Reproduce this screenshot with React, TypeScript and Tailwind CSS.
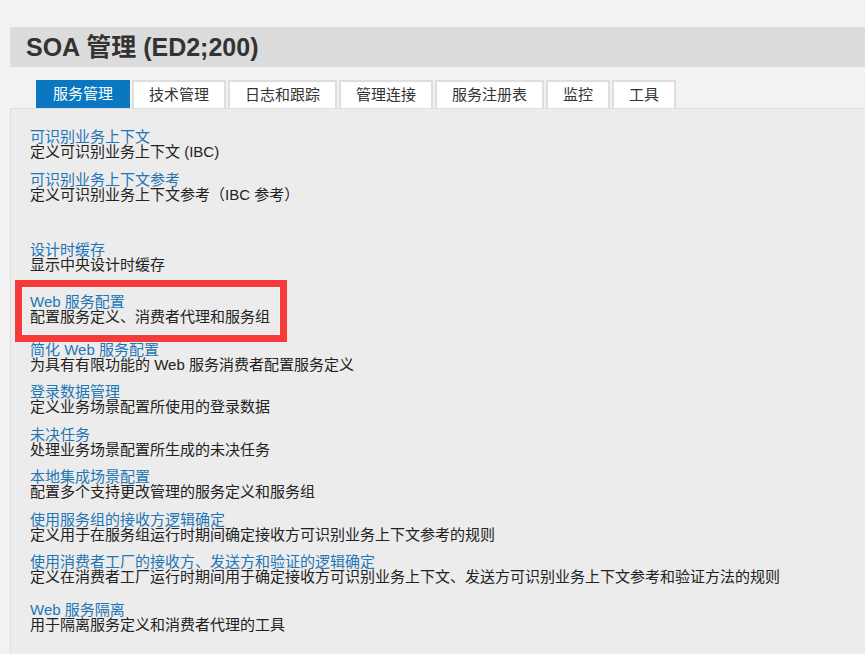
const tabs = ["服务管理", "技术管理", "日志和跟踪", "管理连接", "服务注册表", "监控", "工具"];

type Entry = { title: string; desc: string; mt: string };

const entries: Entry[] = [
  { title: "可识别业务上下文", desc: "定义可识别业务上下文 (IBC)", mt: "mt-0" },
  { title: "可识别业务上下文参考", desc: "定义可识别业务上下文参考（IBC 参考）", mt: "mt-[13px]" },
  { title: "设计时缓存", desc: "显示中央设计时缓存", mt: "mt-[40px]" },
  { title: "Web 服务配置", desc: "配置服务定义、消费者代理和服务组", mt: "mt-[22px]" },
  { title: "简化 Web 服务配置", desc: "为具有有限功能的 Web 服务消费者配置服务定义", mt: "mt-[18px]" },
  { title: "登录数据管理", desc: "定义业务场景配置所使用的登录数据", mt: "mt-[12px]" },
  { title: "未决任务", desc: "处理业务场景配置所生成的未决任务", mt: "mt-[13px]" },
  { title: "本地集成场景配置", desc: "配置多个支持更改管理的服务定义和服务组", mt: "mt-[12px]" },
  { title: "使用服务组的接收方逻辑确定", desc: "定义用于在服务组运行时期间确定接收方可识别业务上下文参考的规则", mt: "mt-[13px]" },
  {
    title: "使用消费者工厂的接收方、发送方和验证的逻辑确定",
    desc: "定义在消费者工厂运行时期间用于确定接收方可识别业务上下文、发送方可识别业务上下文参考和验证方法的规则",
    mt: "mt-[12px]",
  },
  { title: "Web 服务隔离", desc: "用于隔离服务定义和消费者代理的工具", mt: "mt-[18px]" },
];

export default function App() {
  return (
    <div className="relative flex h-[654px] w-[865px] flex-col overflow-hidden bg-[#f2f2f2] pt-[27px] font-['Liberation_Sans','Noto_Sans_CJK_SC',sans-serif]">
      <div className="ml-[10px] flex h-[40px] items-center bg-[#dcdcdc] pl-[16px]">
        <h1 className="text-[25px] font-bold leading-none text-[#333]">SOA 管理 (ED2;200)</h1>
      </div>

      <div className="ml-[36px] mt-[13px] flex gap-[2px]">
        {tabs.map((t, i) => (
          <div
            key={t}
            className={
              i === 0
                ? "flex h-[28px] items-center border-2 border-[#0a78c0] bg-[#0a78c0] px-[15px] text-[15px] text-white"
                : "flex h-[28px] items-center border-2 border-b-0 border-[#dedede] bg-white px-[15px] text-[15px] text-[#333]"
            }
          >
            {t}
          </div>
        ))}
      </div>

      <div className="ml-[10px] flex-1 border-l border-t border-[#dedede] bg-[#ececec] pl-[19px] pt-[20px]">
        {entries.map((e) => (
          <div key={e.title} className={e.mt}>
            <div className="text-[15px] leading-[15px] text-[#1f76b5]">{e.title}</div>
            <div className="whitespace-nowrap text-[15px] leading-[15px] text-[#222]">{e.desc}</div>
          </div>
        ))}
      </div>

      {/* annotation box */}
      <div className="absolute left-[15px] top-[280px] h-[62px] w-[272px] border-[7px] border-[#f63a3a]">
        <div className="h-full w-full border border-[#f4f4f4]" />
      </div>
    </div>
  );
}
